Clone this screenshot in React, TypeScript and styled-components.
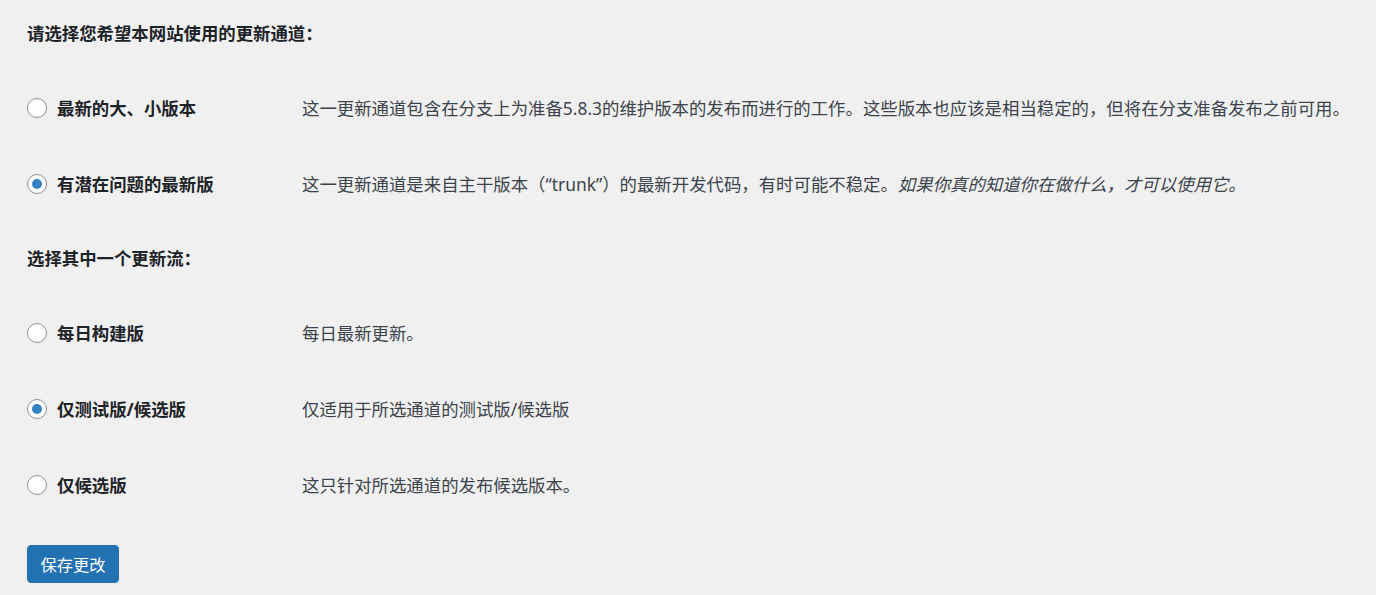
import React from "react";
import styled, { createGlobalStyle } from "styled-components";

const GlobalStyle = createGlobalStyle`
  html, body {
    margin: 0;
    padding: 0;
    background: #f0f0f1;
  }
  body {
    font-family: "Noto Sans", "Noto Sans CJK SC", sans-serif;
    color: #3c434a;
  }
`;

const Page = styled.form`
  padding: 21px 0 0 27px;
  display: flex;
  flex-direction: column;
  align-items: flex-start;
`;

const Section = styled.section<{ $gapAfter: number }>`
  display: flex;
  flex-direction: column;
  align-self: stretch;
  margin-bottom: ${(p) => p.$gapAfter}px;
`;

const Heading = styled.h3`
  margin: 0 0 25px;
  height: 24px;
  line-height: 24px;
  font-size: 17.4px;
  font-weight: 700;
  color: #1d2327;
  font-family: "Noto Sans", "Noto Sans CJK SC", sans-serif;
`;

const Row = styled.div`
  display: grid;
  grid-template-columns: 275px 1fr;
  align-items: center;
  height: 76px;
`;

const Label = styled.label`
  display: flex;
  align-items: center;
  gap: 10px;
  font-size: 17.4px;
  font-weight: 700;
  color: #1d2327;
  line-height: 24px;
  white-space: nowrap;
`;

const Radio = styled.input.attrs({ type: "radio" })`
  appearance: none;
  -webkit-appearance: none;
  margin: 0;
  width: 20px;
  height: 20px;
  flex: none;
  border-radius: 50%;
  border: 1px solid #8c8f94;
  background: #fff;
  box-sizing: border-box;
  display: grid;
  place-items: center;
  &:checked::before {
    content: "";
    width: 10px;
    height: 10px;
    border-radius: 50%;
    background: #3582c4;
  }
`;

const Description = styled.p`
  margin: 0;
  font-size: 17.4px;
  line-height: 24px;
  color: #3c434a;
  white-space: nowrap;
`;

const Em = styled.em`
  font-style: italic;
`;

const SaveButton = styled.button`
  height: 38px;
  width: 92px;
  padding: 0;
  border-radius: 4px;
  border: 1px solid #2271b1;
  background: #2271b1;
  color: #fff;
  font-family: "Noto Sans", "Noto Sans CJK SC", sans-serif;
  font-size: 16.25px;
  cursor: pointer;
`;

type Option = {
  id: string;
  label: string;
  desc: React.ReactNode;
  checked?: boolean;
};

const channels: Option[] = [
  {
    id: "ch-minor",
    label: "最新的大、小版本",
    desc: "这一更新通道包含在分支上为准备5.8.3的维护版本的发布而进行的工作。这些版本也应该是相当稳定的，但将在分支准备发布之前可用。",
  },
  {
    id: "ch-trunk",
    label: "有潜在问题的最新版",
    checked: true,
    desc: (
      <>
        这一更新通道是来自主干版本（“trunk”）的最新开发代码，有时可能不稳定。
        <Em>如果你真的知道你在做什么，才可以使用它。</Em>
      </>
    ),
  },
];

const streams: Option[] = [
  { id: "st-nightly", label: "每日构建版", desc: "每日最新更新。" },
  { id: "st-beta", label: "仅测试版/候选版", desc: "仅适用于所选通道的测试版/候选版", checked: true },
  { id: "st-rc", label: "仅候选版", desc: "这只针对所选通道的发布候选版本。" },
];

const OptionRows = ({ name, items }: { name: string; items: Option[] }) => (
  <>
    {items.map((o) => (
      <Row key={o.id}>
        <Label htmlFor={o.id}>
          <Radio id={o.id} name={name} defaultChecked={o.checked} />
          {o.label}
        </Label>
        <Description>{o.desc}</Description>
      </Row>
    ))}
  </>
);

export default function App() {
  return (
    <>
      <GlobalStyle />
      <Page onSubmit={(e) => e.preventDefault()}>
        <Section $gapAfter={24}>
          <Heading>请选择您希望本网站使用的更新通道：</Heading>
          <OptionRows name="channel" items={channels} />
        </Section>
        <Section $gapAfter={22}>
          <Heading>选择其中一个更新流：</Heading>
          <OptionRows name="stream" items={streams} />
        </Section>
        <SaveButton type="submit">保存更改</SaveButton>
      </Page>
    </>
  );
}
